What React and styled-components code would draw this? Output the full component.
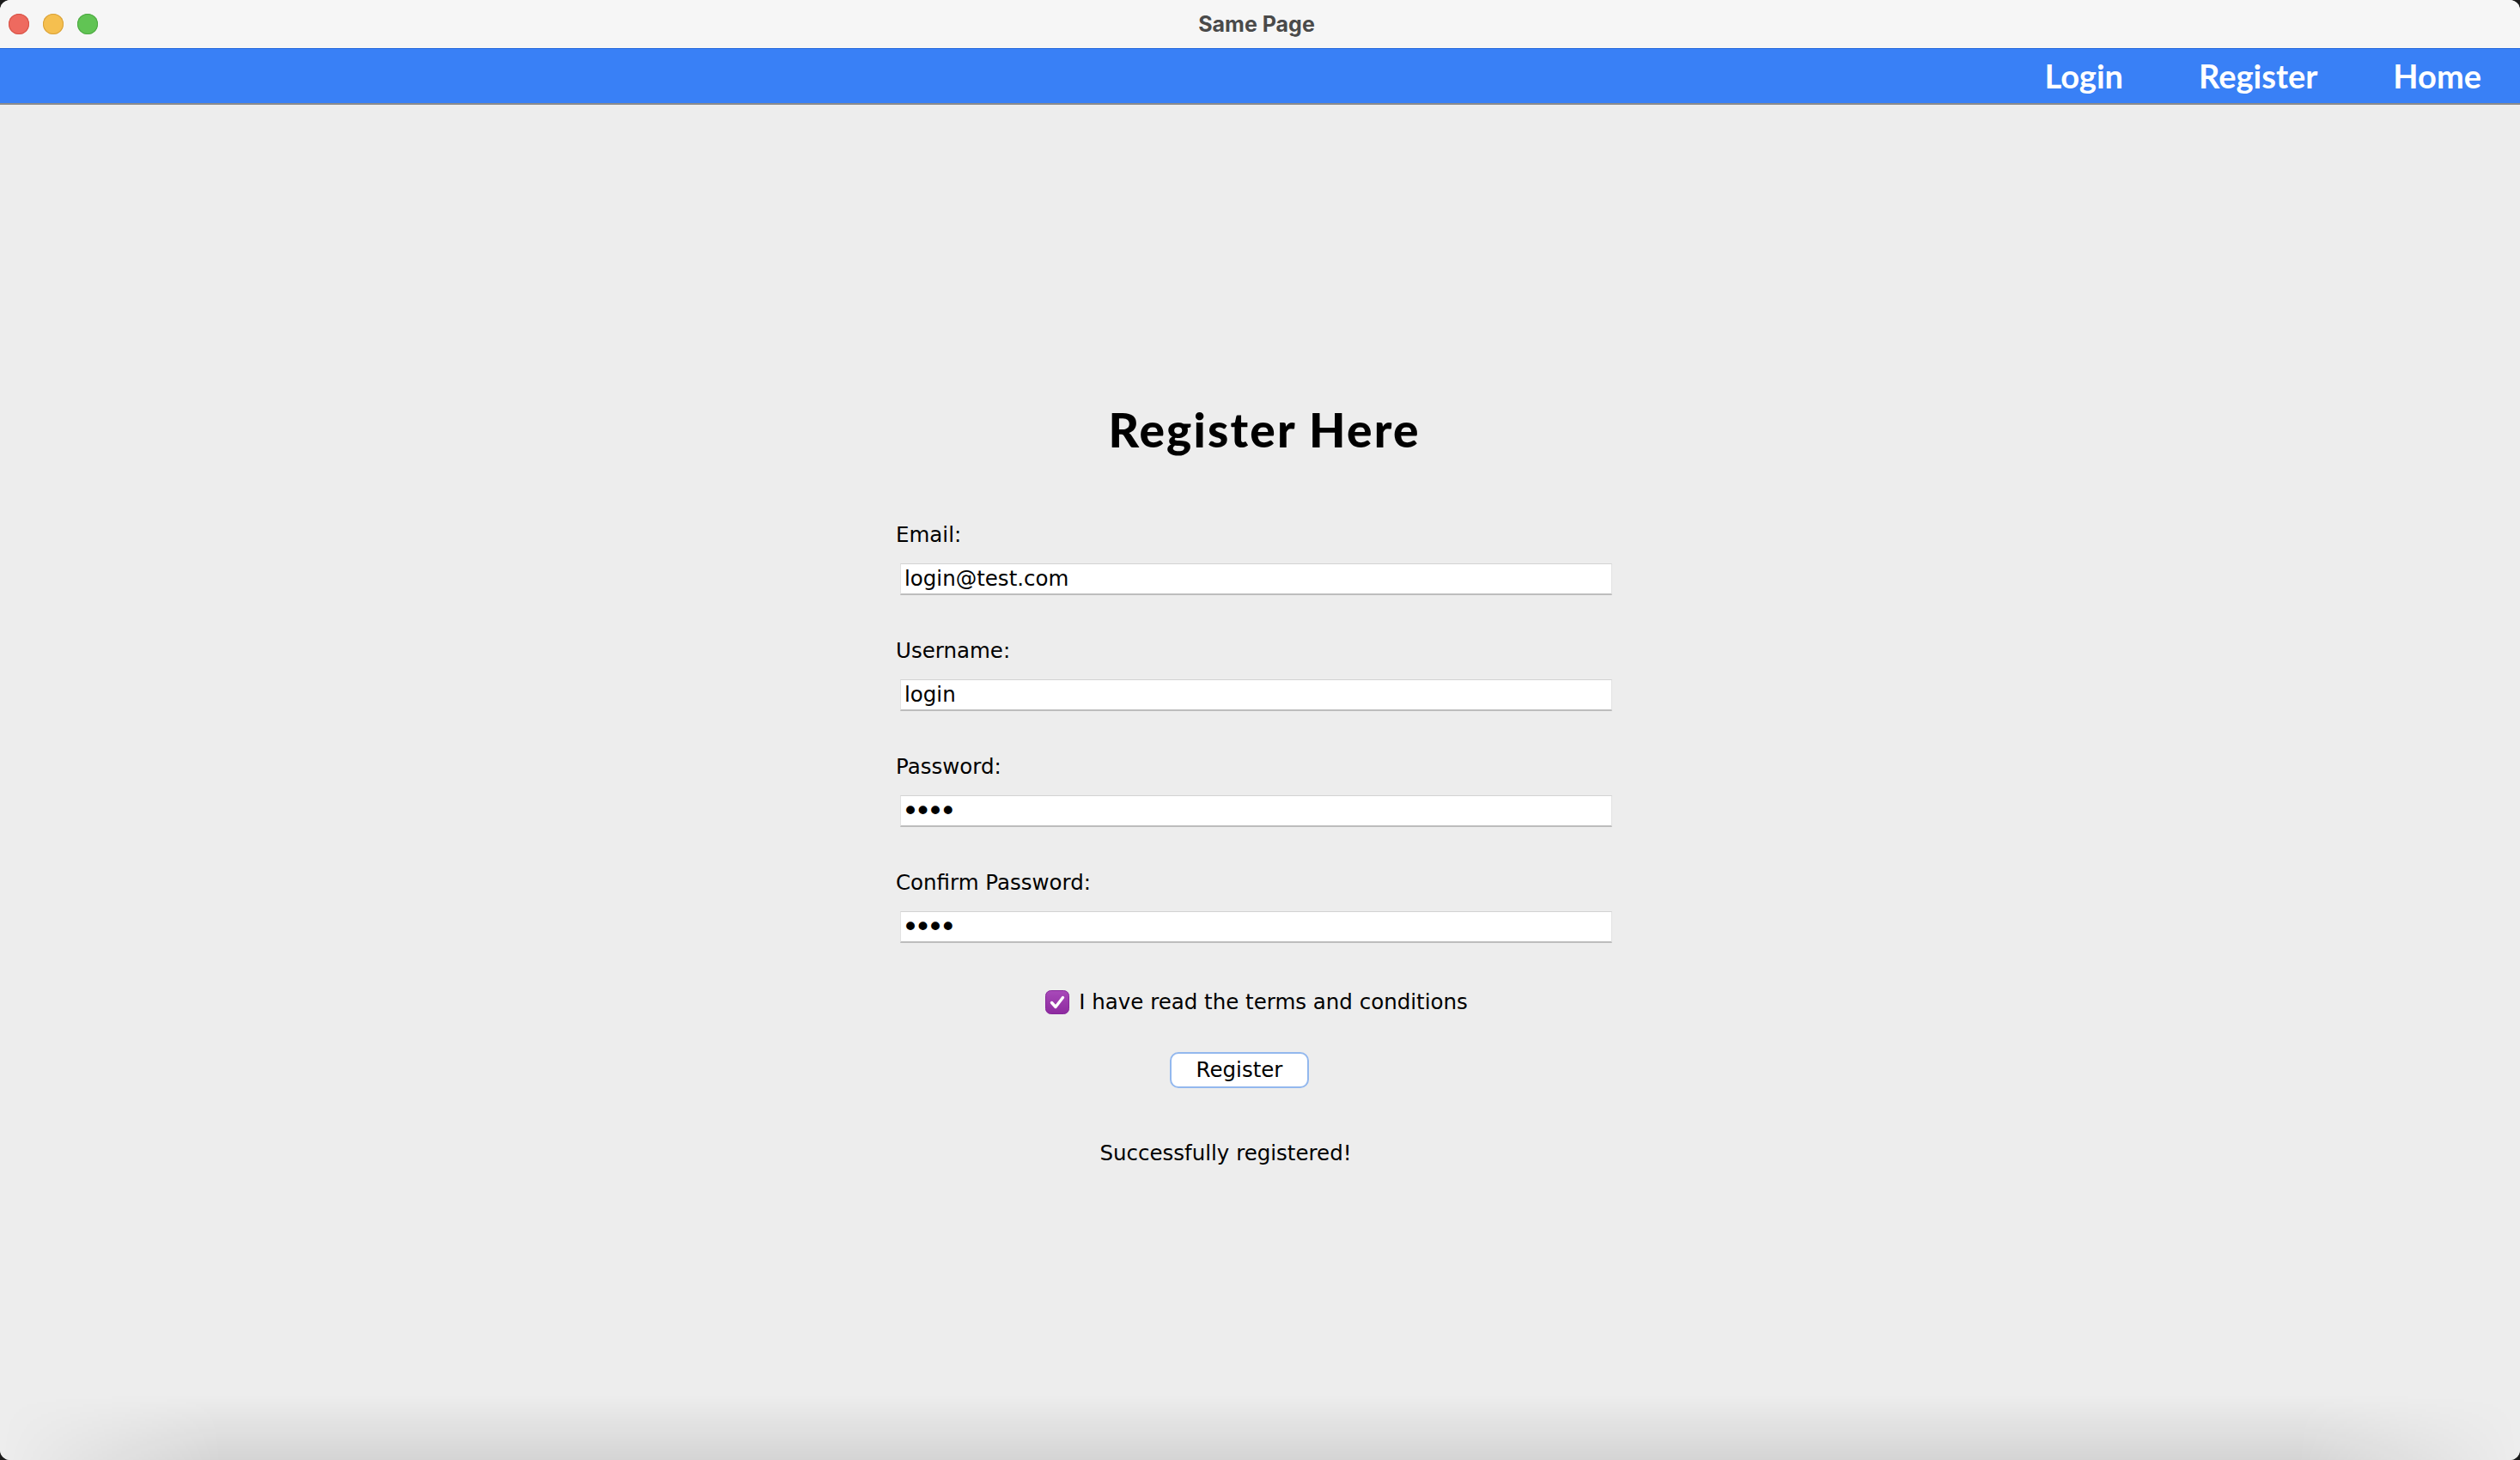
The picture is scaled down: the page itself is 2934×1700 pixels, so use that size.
import React from 'react';
import styled, { createGlobalStyle } from 'styled-components';

const GlobalStyle = createGlobalStyle`
  * { box-sizing: border-box; }
  html, body {
    margin: 0;
    padding: 0;
    background: #1b1b1b;
  }
  body {
    width: 2934px;
    height: 1700px;
    overflow: hidden;
  }
`;

const App = () => {
  return (
    <>
      <GlobalStyle />
      <Window>
        <TitleBar>
          <Lights>
            <Light $color="#ee6a5f" $edge="#d65347" />
            <Light $color="#f5bf4f" $edge="#d8a13a" />
            <Light $color="#61c454" $edge="#4ea843" />
          </Lights>
          <WindowTitle>Same Page</WindowTitle>
          <span />
        </TitleBar>

        <NavBar>
          <NavLink>Login</NavLink>
          <NavLink>Register</NavLink>
          <NavLink>Home</NavLink>
        </NavBar>

        <Main>
          <Column>
            <Heading $shift={12}>Register Here</Heading>

            <Fields>
              <Field>
                <Label>Email:</Label>
                <Input type="text" value="login@test.com" readOnly />
              </Field>
              <Field>
                <Label>Username:</Label>
                <Input type="text" value="login" readOnly />
              </Field>
              <Field>
                <Label>Password:</Label>
                <Input type="password" value="test" readOnly />
              </Field>
              <Field>
                <Label>Confirm Password:</Label>
                <Input type="password" value="test" readOnly />
              </Field>
            </Fields>

            <CheckRow $shift={3}>
              <CheckBox />
              <span>I have read the terms and conditions</span>
            </CheckRow>

            <Button $shift={-17}>Register</Button>

            <Message $shift={-33}>Successfully registered!</Message>
          </Column>
        </Main>
      </Window>
    </>
  );
};

// checkbox marcado, dibujado como el de macOS
const CheckBox = () => (
  <svg width="28" height="28" viewBox="0 0 28 28">
    <defs>
      <linearGradient id="cbg" x1="0" y1="0" x2="0" y2="1">
        <stop offset="0" stopColor="#a84ab9" />
        <stop offset="1" stopColor="#8d2a9f" />
      </linearGradient>
    </defs>
    <rect x="0.5" y="0.5" width="27" height="27" rx="6" fill="url(#cbg)" stroke="#86279a" />
    <path d="M7.5 14.5 L12 19.5 L20.5 8.5" fill="none" stroke="#fff" strokeWidth="3.4" strokeLinecap="round" strokeLinejoin="round" />
  </svg>
);

const shiftMargins = ({ $shift = 0 }) => `
  margin-left: ${Math.max(0, $shift * 2)}px;
  margin-right: ${Math.max(0, -$shift * 2)}px;
`;

const Window = styled.div`
  height: 1700px;
  display: flex;
  flex-direction: column;
  background: #ededed;
  border-radius: 12px;
  overflow: hidden;
`;

const TitleBar = styled.div`
  flex: none;
  height: 56px;
  padding: 0 10px;
  background: #f6f6f6;
  display: grid;
  grid-template-columns: 1fr auto 1fr;
  align-items: center;
`;

const Lights = styled.div`
  display: flex;
  gap: 16px;
`;

const Light = styled.span`
  width: 24px;
  height: 24px;
  border-radius: 50%;
  background: ${p => p.$color};
  box-shadow: inset 0 0 0 1px ${p => p.$edge};
`;

const WindowTitle = styled.div`
  font-family: Inter, "Noto Sans", sans-serif;
  font-weight: 700;
  font-size: 25px;
  color: #4a4a4a;
  margin-right: 8px;
`;

const NavBar = styled.nav`
  flex: none;
  height: 66px;
  background: #3980f6;
  border-top: 1px solid #2468dc;
  border-bottom: 2px solid #8b8b8b;
  display: flex;
  justify-content: flex-end;
  align-items: center;
  gap: 88px;
  padding: 0 45px 2px 0;
`;

const NavLink = styled.a`
  font-family: Lato, "Open Sans", sans-serif;
  font-weight: 700;
  font-size: 38px;
  color: #ffffff;
  cursor: pointer;
`;

const Main = styled.main`
  position: relative;
  flex: 1;
  display: flex;
  justify-content: center;
  align-items: flex-start;
  padding-top: 351px;
  background: #ededed;

  /* sombra suave del borde inferior de la ventana */
  &::after {
    content: "";
    position: absolute;
    left: 0;
    right: 0;
    bottom: 0;
    height: 75px;
    background: linear-gradient(to bottom, rgba(0, 0, 0, 0), rgba(0, 0, 0, 0.1));
    -webkit-mask-image: linear-gradient(to right, transparent 0, #000 260px, #000 calc(100% - 260px), transparent 100%);
    mask-image: linear-gradient(to right, transparent 0, #000 260px, #000 calc(100% - 260px), transparent 100%);
    pointer-events: none;
  }
`;

const Column = styled.div`
  width: 836px;
  margin-right: 14px;
  display: flex;
  flex-direction: column;
  font-family: "DejaVu Sans", Verdana, sans-serif;
  font-size: 24.5px;
  color: #000;
`;

const Heading = styled.h1`
  align-self: center;
  ${shiftMargins}
  margin-top: 0;
  margin-bottom: 81px;
  font-family: Lato, "Open Sans", sans-serif;
  font-weight: 900;
  font-size: 55px;
  line-height: 54px;
  letter-spacing: 2.2px;
  color: #000;
`;

const Fields = styled.div`
  display: flex;
  flex-direction: column;
  gap: 50.5px;
`;

const Field = styled.div`
  display: flex;
  flex-direction: column;
  gap: 17.5px;
`;

const Label = styled.label`
  line-height: 30px;
  padding-left: 1px;
`;

const Input = styled.input`
  height: 37px;
  margin: 0 1px 0 6px;
  padding: 0 4px;
  background: #fff;
  border: 1px solid #e2e2e2;
  border-top-color: #d3d3d3;
  border-bottom: 2px solid #bdbdbd;
  border-radius: 0;
  outline: none;
  font-family: "DejaVu Sans", Verdana, sans-serif;
  font-size: 24.5px;
  color: #000;

  &[type="password"] {
    font-size: 34px;
    letter-spacing: -5.5px;
    padding-left: 1px;
  }
`;

const CheckRow = styled.div`
  align-self: center;
  ${shiftMargins}
  margin-top: 54px;
  height: 30px;
  display: flex;
  align-items: center;
  gap: 11px;
  line-height: 30px;
`;

const Button = styled.button`
  align-self: center;
  ${shiftMargins}
  margin-top: 43px;
  height: 42px;
  padding: 0 29px;
  background: #fff;
  border: 2px solid #93b8ee;
  border-radius: 10px;
  font-family: "DejaVu Sans", Verdana, sans-serif;
  font-size: 24.5px;
  color: #000;
  cursor: pointer;
`;

const Message = styled.p`
  align-self: center;
  ${shiftMargins}
  margin-top: 61px;
  margin-bottom: 0;
  line-height: 30px;
`;

export default App;
